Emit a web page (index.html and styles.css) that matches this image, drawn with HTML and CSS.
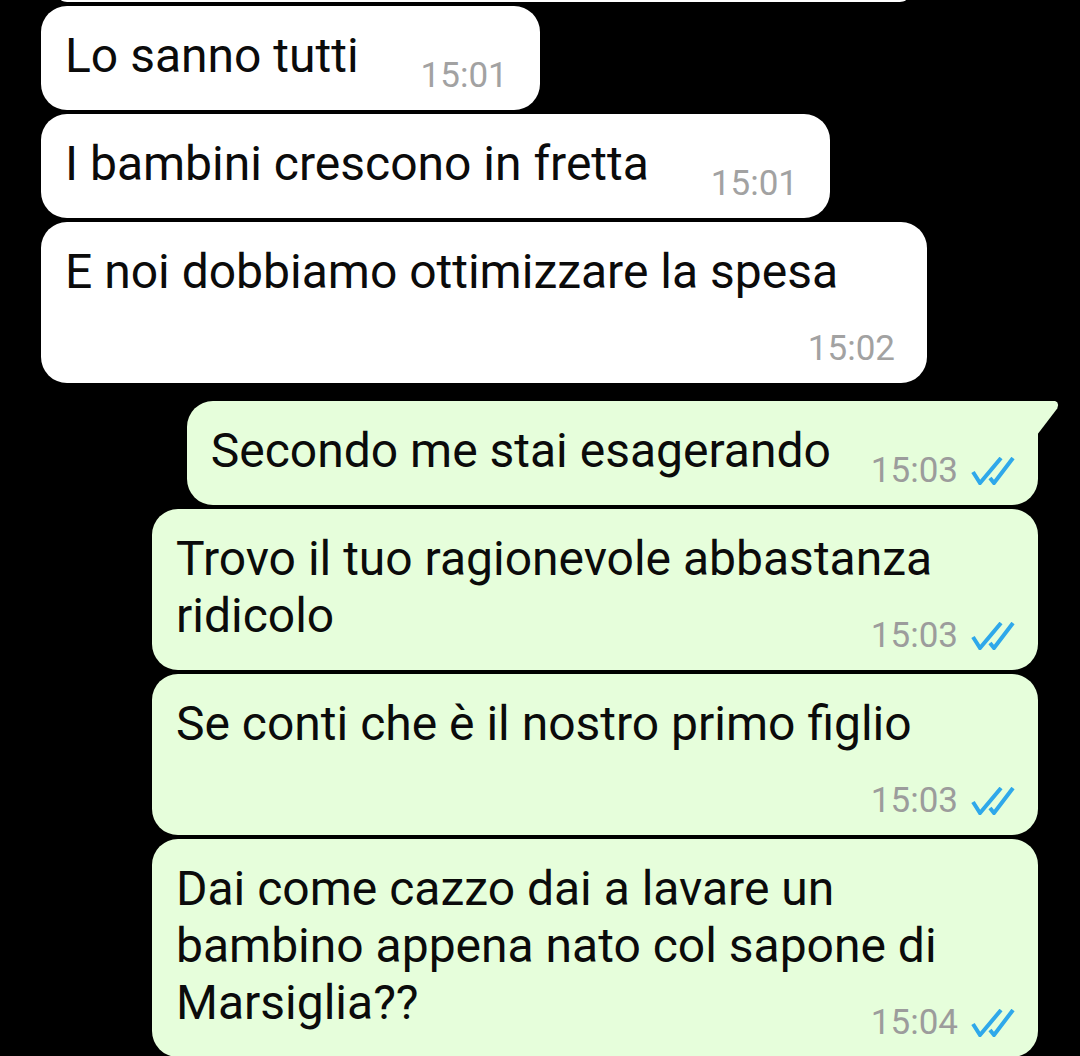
FILE: index.html
```html
<!DOCTYPE html>
<html lang="it">
<head>
  <meta charset="UTF-8" />
  <meta name="viewport" content="width=device-width, initial-scale=1.0"/>
  <title>Chat</title>
  <link rel="stylesheet" href="styles.css">
</head>
<body>

  <div class="chat">
    <div class="edge"></div>

    <div class="bubble in">
      Lo sanno tutti<span class="meta">15:01</span>
    </div>
    <div class="bubble in">
      I bambini crescono in fretta<span class="meta">15:01</span>
    </div>
    <div class="bubble in">
      E noi dobbiamo ottimizzare la spesa<span class="meta">15:02</span>
    </div>

    <div class="bubble out first">
      Secondo me stai esagerando<span class="meta">15:03<svg class="ticks" viewBox="0 0 44 28"><path d="M2 15 L9 26 L30 1 M19 21 L23 26 L42 1"/></svg></span>
    </div>
    <div class="bubble out">
      Trovo il tuo ragionevole abbastanza ridicolo<span class="meta">15:03<svg class="ticks" viewBox="0 0 44 28"><path d="M2 15 L9 26 L30 1 M19 21 L23 26 L42 1"/></svg></span>
    </div>
    <div class="bubble out">
      Se conti che è il nostro primo figlio<span class="meta">15:03<svg class="ticks" viewBox="0 0 44 28"><path d="M2 15 L9 26 L30 1 M19 21 L23 26 L42 1"/></svg></span>
    </div>
    <div class="bubble out">
      Dai come cazzo dai a lavare un bambino appena nato col sapone di Marsiglia??<span class="meta">15:04<svg class="ticks" viewBox="0 0 44 28"><path d="M2 15 L9 26 L30 1 M19 21 L23 26 L42 1"/></svg></span>
    </div>
  </div>

</body>
</html>
```

FILE: styles.css
```css
* {
  margin: 0;
  padding: 0;
  box-sizing: border-box;
  font-family: Roboto, "Noto Sans", sans-serif;
}

body {
  background: #000;
  height: 1056px;
  overflow: hidden;
}

.chat {
  display: flex;
  flex-direction: column;
  gap: 4px;
  padding: 0 42px 0 41px;
}

/* bottom of the previous message, cut by the screen edge */
.edge {
  height: 2px;
  width: 845px;
  margin-left: 20px;
  background: #fff;
  border-radius: 0 0 10px 10px / 0 0 2px 2px;
}

.bubble {
  display: flow-root;
  position: relative;
  max-width: 886px;
  padding: 21px 32px 15px 24px;
  font-size: 48px;
  line-height: 57px;
  color: #0b0b0b;
  border-radius: 26px;
}

.in {
  align-self: flex-start;
  background: #fff;
}

.out {
  align-self: flex-end;
  background: #e6fedb;
  padding-right: 23px;
}

.out.first {
  margin-top: 14px;
  border-top-right-radius: 0;
}

/* little tail on the first message of a group */
.out.first::after {
  content: "";
  position: absolute;
  top: 0;
  right: -21px;
  width: 22px;
  height: 34px;
  background: #e6fedb;
  clip-path: polygon(0 0, 82% 0, 92% 4%, 96% 12%, 92% 22%, 0 100%);
}

.meta {
  float: right;
  display: flex;
  align-items: center;
  margin: 30px 0 0 62px;
  font-size: 35px;
  line-height: 38px;
  color: #a2a2a2;
}

.out .meta {
  margin-left: 40px;
  color: #9c9c9c;
}

.ticks {
  width: 44px;
  height: 28px;
  margin-left: 13px;
  fill: none;
  stroke: #2fa8ea;
  stroke-width: 4;
}
```
